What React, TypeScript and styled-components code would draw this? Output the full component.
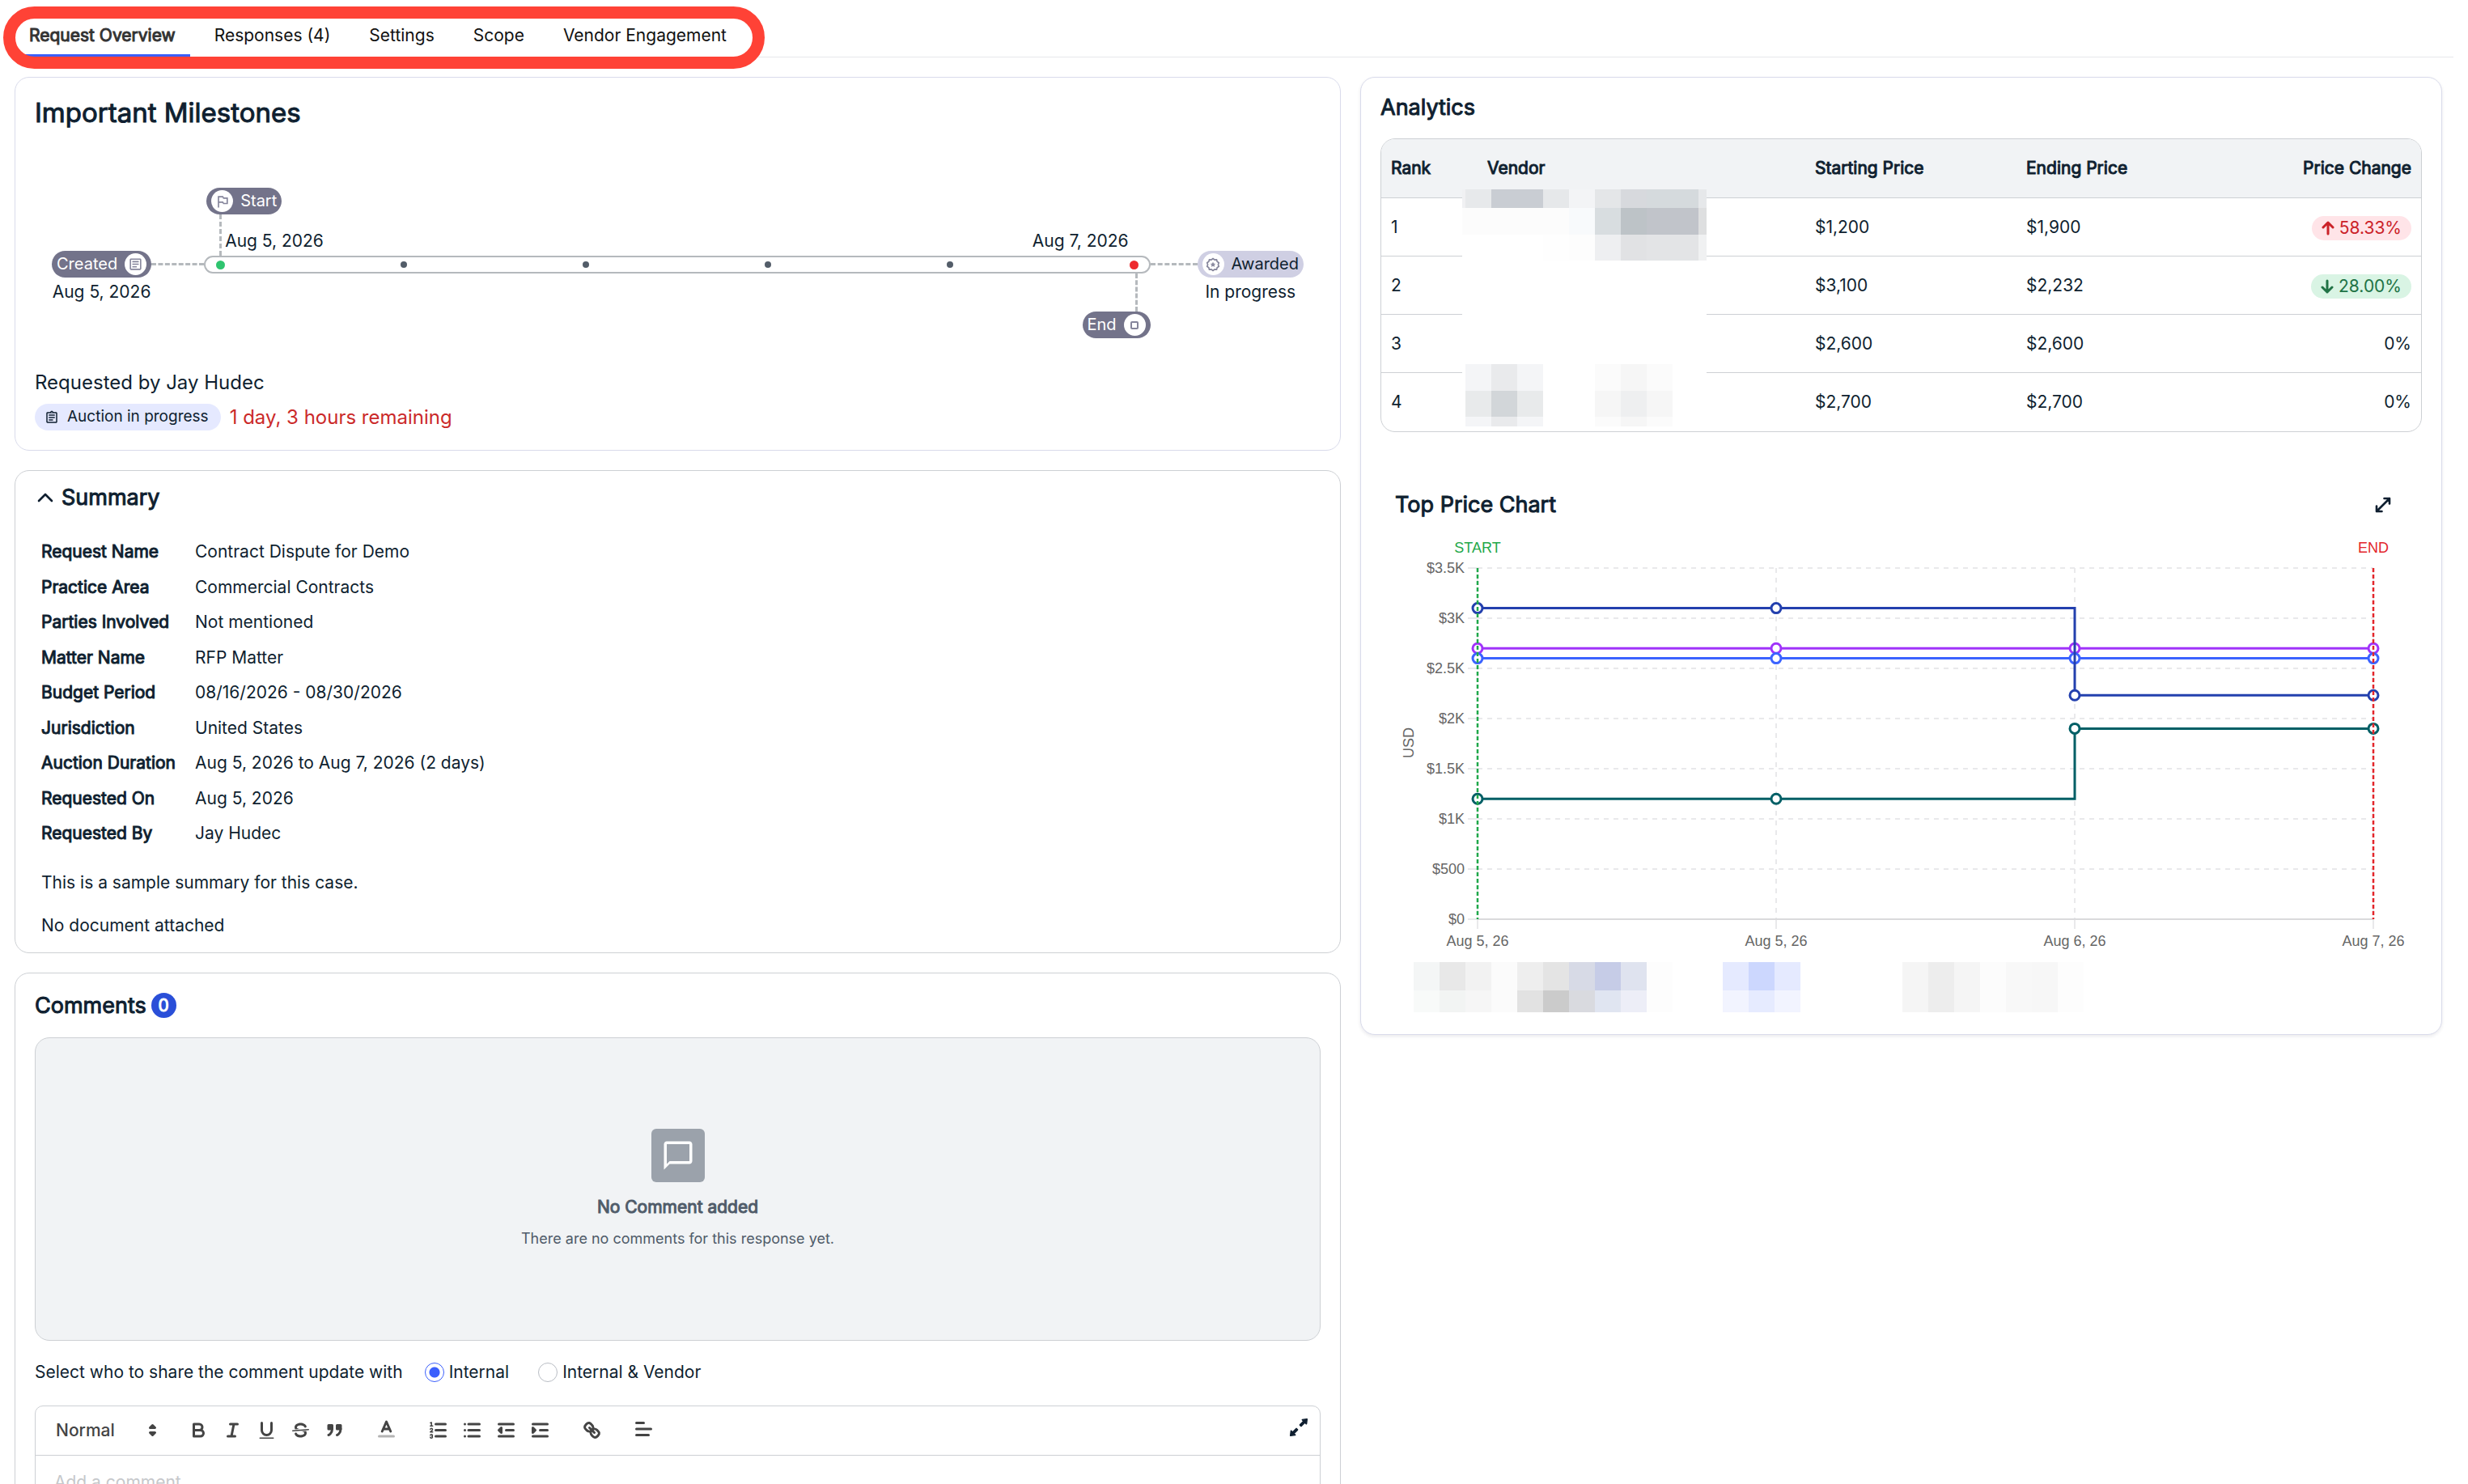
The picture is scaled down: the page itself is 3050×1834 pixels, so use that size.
import React, { useState } from "react";
import styled, { createGlobalStyle, css } from "styled-components";
import {
  MdOutlineArticle,
  MdOutlinedFlag,
  MdOutlineAssignment,
  MdChatBubbleOutline,
} from "react-icons/md";
import { AiOutlineArrowsAlt } from "react-icons/ai";

const color = {
  ink: "#0f1f30",
  line: "#cdd0d4",
  lavender: "#d9dbeb",
  track: "#b5b9bd",
  pill: "#73738a",
  soft: "#f1f3f5",
  blue: "#3b5ffc",
  toolbar: "#444444",
};

const GlobalStyle = createGlobalStyle`
  *, *::before, *::after { box-sizing: border-box; }
  body {
    margin: 0;
    background: #ffffff;
    color: ${color.ink};
    font-family: Inter, "Liberation Sans", sans-serif;
    font-size: 21px;
    line-height: 1.5;
  }
  h1, h2, h3, p, dl, dd, dt { margin: 0; font-weight: 400; }
  button { font: inherit; color: inherit; background: none; border: 0; padding: 0; cursor: pointer; }
  svg { display: block; }
`;

const strong = css`
  -webkit-text-stroke: 1px currentColor;
`;

const Page = styled.div`
  height: 100vh;
  overflow: hidden;
`;

/* ---------- Tabs ---------- */

const TabBar = styled.nav`
  position: relative;
  display: flex;
  gap: 12px;
  height: 71px;
  margin: 0 18px;
  border-bottom: 1px solid #e7e8ec;
`;

const Tab = styled.button<{ $active?: boolean }>`
  padding: 20px 18px 0;
  color: ${(p) => (p.$active ? "#333333" : "#111111")};
  border-bottom: 3px solid ${(p) => (p.$active ? color.blue : "transparent")};
  ${(p) => p.$active && strong}
`;

const Highlight = styled.div`
  position: absolute;
  left: -14px;
  top: 8px;
  width: 941px;
  height: 77px;
  border: 15px solid #ff4236;
  border-radius: 39px;
  pointer-events: none;
`;

/* ---------- Shell ---------- */

const Columns = styled.main`
  display: grid;
  grid-template-columns: minmax(0, 1639fr) minmax(0, 1337fr);
  align-items: start;
  gap: 24px;
  padding: 24px 32px 24px 18px;
`;

const Stack = styled.div`
  display: flex;
  flex-direction: column;
  gap: 24px;
`;

const Card = styled.section<{ $edge?: string; $raised?: boolean }>`
  padding: 24px;
  border: 1px solid ${(p) => p.$edge ?? color.line};
  border-radius: 18px;
  background: #ffffff;
  box-shadow: ${(p) => (p.$raised ? "0 2px 4px rgba(20, 20, 60, 0.09)" : "none")};
`;

const PageHeading = styled.h1`
  font-size: 33px;
  line-height: 38px;
  ${strong}
`;

const Heading = styled.h2`
  font-size: 27px;
  line-height: 38px;
  ${strong}
`;

/* ---------- Milestones ---------- */

const Timeline = styled.div`
  display: flex;
  align-items: flex-start;
  margin: 74px 21px 37px;
`;

const EndPoint = styled.div`
  display: flex;
  flex-direction: column;
  align-items: center;
  gap: 2px;
  padding-top: 78px;
  line-height: 32px;
`;

const Connector = styled.div<{ $length: number }>`
  width: ${(p) => p.$length}px;
  margin-top: 93px;
  border-top: 3px dashed ${color.track};
`;

const Pill = styled.span<{ $light?: boolean; $iconLast?: boolean }>`
  display: inline-flex;
  flex-direction: ${(p) => (p.$iconLast ? "row-reverse" : "row")};
  align-items: center;
  gap: 9px;
  height: 33px;
  padding: 0 6px;
  border-radius: 17px;
  font-size: 20px;
  line-height: 33px;
  color: ${(p) => (p.$light ? color.ink : "#ffffff")};
  background: ${(p) => (p.$light ? "#cfcfe3" : color.pill)};
`;

const PillIcon = styled.span`
  display: grid;
  place-items: center;
  width: 27px;
  height: 27px;
  border-radius: 50%;
  background: #ffffff;
  color: #85859b;
`;

const Track = styled.div`
  flex: 1;
  display: flex;
  flex-direction: column;
`;

const PillRow = styled.div<{ $end?: boolean }>`
  display: flex;
  justify-content: ${(p) => (p.$end ? "flex-end" : "flex-start")};
  padding-left: 3px;
`;

const StemRow = styled.div`
  display: flex;
  justify-content: space-between;
  align-items: flex-end;
  height: 51px;
  padding: 0 27px 0 19px;
`;

const DateGroup = styled.div`
  display: flex;
  align-items: flex-end;
  gap: 4px;
  line-height: 30px;
  padding-bottom: 3px;
`;

const Stem = styled.div<{ $height: number }>`
  height: ${(p) => p.$height}px;
  margin-bottom: -3px;
  border-left: 3px dashed ${color.track};
`;

const Bar = styled.div`
  display: flex;
  justify-content: space-between;
  align-items: center;
  height: 22px;
  padding: 0 13px;
  border: 2px solid ${color.track};
  border-radius: 11px;
`;

const Dot = styled.span<{ $tone?: string }>`
  width: ${(p) => (p.$tone ? 11 : 8)}px;
  height: ${(p) => (p.$tone ? 11 : 8)}px;
  border-radius: 50%;
  background: ${(p) => p.$tone ?? "#535d69"};
`;

const EndStemRow = styled.div`
  display: flex;
  justify-content: flex-end;
  height: 47px;
  padding-right: 16px;
`;

const Requester = styled.p`
  font-size: 24px;
  line-height: 36px;
`;

const StatusRow = styled.div`
  display: flex;
  align-items: center;
  gap: 11px;
  margin-top: 8px;
`;

const StatusChip = styled.span`
  display: inline-flex;
  align-items: center;
  gap: 10px;
  height: 33px;
  padding: 0 15px 0 12px;
  border-radius: 17px;
  font-size: 19px;
  background: #e5e9ff;
`;

const Remaining = styled.span`
  font-size: 24px;
  line-height: 33px;
  color: #cb2a2a;
`;

/* ---------- Summary ---------- */

const SummaryCard = styled(Card)`
  padding: 14px 32px 17px;
`;

const Toggle = styled.button`
  display: flex;
  align-items: center;
  gap: 10px;
  margin-left: -5px;
`;

const Facts = styled.dl`
  display: grid;
  grid-template-columns: max-content 1fr;
  gap: 12px 24px;
  margin-top: 32px;
`;

const Term = styled.dt`
  ${strong}
`;

const Note = styled.p`
  margin-top: 22px;
`;

const LeadNote = styled.p`
  margin-top: 29px;
`;

/* ---------- Comments ---------- */

const CommentsHeading = styled.h2`
  display: flex;
  align-items: center;
  gap: 6px;
  font-size: 27px;
  line-height: 31px;
  ${strong}
`;

const Count = styled.span`
  width: 31px;
  height: 31px;
  border-radius: 50%;
  background: #2a4fd8;
  color: #ffffff;
  font-size: 21px;
  line-height: 31px;
  text-align: center;
`;

const EmptyState = styled.div`
  display: flex;
  flex-direction: column;
  align-items: center;
  justify-content: center;
  height: 375px;
  margin: 24px 0;
  border: 1px solid ${color.line};
  border-radius: 18px;
  background: ${color.soft};
  color: #4f5b69;
`;

const EmptyIcon = styled.span`
  display: grid;
  place-items: center;
  width: 66px;
  height: 66px;
  border-radius: 6px;
  background: #9ba2ab;
  color: #ffffff;
`;

const EmptyTitle = styled.p`
  margin: 15px 0 9px;
  line-height: 32px;
  ${strong}
`;

const EmptyText = styled.p`
  font-size: 18px;
  line-height: 27px;
`;

const Audience = styled.fieldset`
  display: flex;
  align-items: center;
  gap: 36px;
  margin: 0 0 26px;
  padding: 0;
  border: 0;
  line-height: 30px;
`;

const AudienceText = styled.span`
  margin-right: -9px;
`;

const RadioLabel = styled.label`
  display: flex;
  align-items: center;
  gap: 6px;
`;

const Radio = styled.input`
  appearance: none;
  width: 24px;
  height: 24px;
  margin: 0;
  border: 1px solid #b9bdc4;
  border-radius: 50%;
  background: #ffffff;
  &:checked {
    border-color: ${color.blue};
    background: radial-gradient(circle, ${color.blue} 6px, #ffffff 7px);
  }
`;

const Editor = styled.div`
  border: 1px solid ${color.line};
  border-radius: 10px;
`;

const Toolbar = styled.div`
  display: flex;
  align-items: center;
  gap: 22px;
  height: 61px;
  padding: 0 11px;
  border-bottom: 1px solid ${color.line};
  color: ${color.toolbar};
`;

const ToolGroup = styled.div`
  display: flex;
`;

const ToolButton = styled.button`
  display: grid;
  place-items: center;
  width: 42px;
  height: 36px;
`;

const ExpandTool = styled.button`
  margin: 0 0 8px auto;
  color: ${color.ink};
`;

const StylePicker = styled.label`
  display: grid;
  align-items: center;
  width: 147px;
  > * { grid-area: 1 / 1; }
  > svg { justify-self: end; pointer-events: none; }
`;

const StyleSelect = styled.select`
  appearance: none;
  width: 100%;
  height: 36px;
  padding: 0 14px;
  border: 0;
  background: none;
  color: ${color.toolbar};
  font: inherit;
  font-weight: 500;
`;

const CommentBox = styled.textarea`
  display: block;
  width: 100%;
  height: 180px;
  padding: 17px 23px;
  border: 0;
  resize: none;
  background: none;
  font: inherit;
  &::placeholder { color: #c6c8cb; }
`;

/* ---------- Analytics ---------- */

const AnalyticsCard = styled(Card)`
  padding: 18px 24px 27px;
`;

const TableFrame = styled.div`
  position: relative;
  margin-top: 19px;
  border: 1px solid ${color.line};
  border-radius: 18px;
`;

const PriceTable = styled.table`
  width: 100%;
  table-layout: fixed;
  border-collapse: separate;
  border-spacing: 0;
  th, td { height: 72px; padding: 0 12px; text-align: left; }
  th { height: 73px; font-weight: 400; background: ${color.soft}; ${strong} }
  th:first-child { border-top-left-radius: 17px; }
  th:last-child { border-top-right-radius: 17px; }
  th:last-child, td:last-child { text-align: right; }
  th, tr:not(:last-child) td { border-bottom: 1px solid ${color.line}; }
`;

const Col = styled.col<{ $width?: number }>`
  width: ${(p) => (p.$width ? `${p.$width}px` : "auto")};
`;

const Change = styled.span<{ $up?: boolean }>`
  display: inline-flex;
  align-items: center;
  gap: 6px;
  height: 30px;
  padding: 0 12px;
  border-radius: 15px;
  line-height: 30px;
  vertical-align: middle;
  color: ${(p) => (p.$up ? "#cb2229" : "#217346")};
  background: ${(p) => (p.$up ? "#ffe4e8" : "#d9f4e4")};
`;

const Mask = styled.div`
  position: absolute;
  left: 100px;
  top: 62px;
  display: grid;
  grid-template-columns: 4px repeat(9, 32px) 10px;
  grid-template-rows: 23px 33px 32px 128px 33px 32px 12px;
`;

const Tile = styled.span<{ $tone: string }>`
  background: ${(p) => p.$tone};
`;

const ChartHead = styled.div`
  display: flex;
  align-items: center;
  justify-content: space-between;
  margin: 71px 38px 13px 18px;
`;

const ChartSvg = styled.svg`
  width: 100%;
  height: auto;
  font-family: "Liberation Sans", Arial, sans-serif;
  font-size: 18px;
`;

const Legend = styled.div`
  display: flex;
  padding-left: 41px;
`;

const LegendSwatch = styled.div<{ $columns: number; $after: number }>`
  display: grid;
  grid-template-columns: repeat(${(p) => p.$columns}, 32px);
  grid-template-rows: 35px 27px;
  margin-right: ${(p) => p.$after}px;
`;

/* ---------- Data ---------- */

const tabs = ["Request Overview", "Responses (4)", "Settings", "Scope", "Vendor Engagement"];

const facts = [
  ["Request Name", "Contract Dispute for Demo"],
  ["Practice Area", "Commercial Contracts"],
  ["Parties Involved", "Not mentioned"],
  ["Matter Name", "RFP Matter"],
  ["Budget Period", "08/16/2026 - 08/30/2026"],
  ["Jurisdiction", "United States"],
  ["Auction Duration", "Aug 5, 2026 to Aug 7, 2026 (2 days)"],
  ["Requested On", "Aug 5, 2026"],
  ["Requested By", "Jay Hudec"],
];

const vendors = [
  { rank: 1, start: "$1,200", end: "$1,900", change: "58.33%", direction: "up" },
  { rank: 2, start: "$3,100", end: "$2,232", change: "28.00%", direction: "down" },
  { rank: 3, start: "$2,600", end: "$2,600", change: "0%" },
  { rank: 4, start: "$2,700", end: "$2,700", change: "0%" },
];

const w = "#ffffff";
const maskTiles = [
  ["#f0f1f3", "#e7e9eb", "#c9cdd3", "#c9cdd3", "#e6e8ea", "#f3f4f6", "#e4e6e8", "#d7d9dd", "#d5dadd", "#d5dadd", "#e6e8ea"],
  ["#fcfcfc", "#fcfcfc", "#fcfcfc", "#fcfcfc", "#fcfcfc", "#f8fafc", "#d8dde0", "#bdc3c7", "#c1c4ca", "#c1c4ca", "#dedfe0"],
  [w, w, w, w, "#fefefe", "#fdfdfd", "#eeeff1", "#e1e2e4", "#e3e4e6", "#e3e4e6", "#f0f1f2"],
  [w, w, w, w, w, w, w, w, w, w, w],
  [w, "#f4f5f7", "#e9eaec", "#f4f5f7", w, w, "#fbfbfb", "#f6f6f6", "#fbfbfb", w, w],
  [w, "#e8eaeb", "#d2d6d9", "#e8eaeb", w, w, "#f6f6f6", "#eeeff0", "#f6f6f6", w, w],
  [w, "#f4f5f7", "#e9eaec", "#f4f5f7", w, w, "#fbfbfb", "#f6f6f6", "#fbfbfb", w, w],
];

const legendGroups = [
  {
    columns: 10,
    after: 62,
    tiles: [
      "#f4f6f6", "#e8e8e8", "#f2f2f2", "#fbfbfb", "#eeeeee", "#e4e4e4", "#d7dae6", "#c6cce7", "#dfe3ef", "#fdfdfd",
      "#f8faf9", "#f2f4f3", "#f6f6f6", "#fbfbfb", "#e2e2e2", "#cbcbcb", "#d9dadf", "#e0e5f1", "#edeef7", "#fdfdfd",
    ],
  },
  {
    columns: 3,
    after: 126,
    tiles: ["#e5eaff", "#ccd7fe", "#e5eaff", "#f2f4ff", "#e6ebff", "#f2f4ff"],
  },
  {
    columns: 7,
    after: 0,
    tiles: [
      "#f5f5f5", "#ededed", "#f5f5f5", "#fcfcfc", "#f8f8f8", "#f7f7f7", "#fdfdfd",
      "#f5f5f5", "#ededed", "#f5f5f5", "#fcfcfc", "#f8f8f8", "#f7f7f7", "#fdfdfd",
    ],
  },
];

/* ---------- Icons ---------- */

const Arrow = ({ up }: { up?: boolean }) => (
  <svg width="16" height="18" viewBox="0 0 16 18" fill="none" stroke="currentColor" strokeWidth="3" strokeLinecap="round" strokeLinejoin="round">
    {up ? <path d="M8 16V2M2 8l6-6 6 6" /> : <path d="M8 2v14M2 10l6 6 6-6" />}
  </svg>
);

const Chevron = () => (
  <svg width="20" height="14" viewBox="0 0 20 14" fill="none" stroke="currentColor" strokeWidth="2.6" strokeLinecap="round" strokeLinejoin="round">
    <path d="M2 11l8-8 8 8" />
  </svg>
);

const SquareIcon = () => (
  <svg width="14" height="14" viewBox="0 0 14 14" fill="none" stroke="currentColor" strokeWidth="2">
    <rect x="3" y="3" width="8" height="8" rx="1" />
  </svg>
);

const AwardIcon = () => (
  <svg width="20" height="20" viewBox="0 0 24 24" fill="none" stroke="currentColor" strokeWidth="2" strokeLinejoin="round">
    <path d="M12 3l2.4 2 3-.4.8 3 2.6 1.6L19.7 12l1.1 2.8-2.6 1.6-.8 3-3-.4L12 21l-2.4-2-3 .4-.8-3-2.6-1.6L4.3 12 3.2 9.2l2.6-1.6.8-3 3 .4z" />
    <path d="M12 9l.9 2 2.1.2-1.6 1.4.5 2.1-1.9-1.1-1.9 1.1.5-2.1L9 11.2l2.1-.2z" fill="currentColor" strokeWidth="1" />
  </svg>
);

const ExpandIcon = () => (
  <svg width="20" height="20" viewBox="0 0 20 20" fill="none" stroke="currentColor" strokeWidth="2.6" strokeLinejoin="round" strokeLinecap="round">
    <path d="M2 18L18 2M11.5 2H18v6.5M8.5 18H2v-6.5" />
  </svg>
);

const QuillIcon = ({ children }: { children: React.ReactNode }) => (
  <svg width="27" height="27" viewBox="0 0 18 18" fill="none" stroke="currentColor" strokeWidth="2" strokeLinecap="round" strokeLinejoin="round">
    {children}
  </svg>
);

const toolGroups: { label: string; icon: React.ReactNode }[][] = [
  [
    {
      label: "Bold",
      icon: <path d="M5,4H9.5A2.5,2.5,0,0,1,9.5,9H5ZM5,9h5.5A2.5,2.5,0,0,1,10.5,14H5Z" />,
    },
    { label: "Italic", icon: <path d="M7,4H13M5,14H11M8,14L10,4" /> },
    {
      label: "Underline",
      icon: (
        <>
          <path d="M5,3V9a4,4,0,0,0,8,0V3" />
          <rect x="3" y="15" width="12" height="1" rx="0.5" fill="currentColor" stroke="none" />
        </>
      ),
    },
    {
      label: "Strike",
      icon: (
        <>
          <path strokeWidth="1" d="M15.5,8.5L2.5,9.5" />
          <g fill="currentColor" stroke="none">
            <path d="M9.007,8C6.542,7.791,6,7.519,6,6.5,6,5.792,7.283,5,9,5c1.571,0,2.765.679,2.969,1.309a1,1,0,0,0,1.9-.617C13.356,4.106,11.354,3,9,3,6.2,3,4,4.538,4,6.5a3.2,3.2,0,0,0,.5,1.843Z" />
            <path d="M8.984,10C11.457,10.208,12,10.479,12,11.5c0,.708-1.283,1.5-3,1.5-1.571,0-2.765-.679-2.969-1.309a1,1,0,1,0-1.9.617C4.644,13.894,6.646,15,9,15c2.8,0,5-1.538,5-3.5a3.2,3.2,0,0,0-.5-1.843Z" />
          </g>
        </>
      ),
    },
    {
      label: "Blockquote",
      icon: (
        <g fill="currentColor">
          <rect x="4" y="5" width="3" height="3" />
          <rect x="11" y="5" width="3" height="3" />
          <path d="M7,8c0,4.031-3,5-3,5M14,8c0,4.031-3,5-3,5" />
        </g>
      ),
    },
  ],
  [
    {
      label: "Text colour",
      icon: (
        <>
          <path opacity="0.4" d="M3,14H15" />
          <path d="M5.5,10L9,2L12.5,10M11.63,8H6.38" />
        </>
      ),
    },
  ],
  [
    {
      label: "Ordered list",
      icon: (
        <>
          <path d="M7,4H15M7,9H15M7,14H15" />
          <g strokeWidth="1">
            <path d="M2.5,5.5H4.5M3.5,5.5V2.6L2.6,3" />
            <path d="M4.5,10.5h-2c0-.234,1.85-1.076,1.85-2.234A.959,.959,0,0,0,2.5,8.156" />
            <path d="M2.5,14.846a.959,.959,0,0,0,1.85-.109A.7,.7,0,0,0,3.75,14a.688,.688,0,0,0,.6-.736,.959,.959,0,0,0-1.85-.109" />
          </g>
        </>
      ),
    },
    { label: "Bulleted list", icon: <path d="M6,4H15M6,9H15M6,14H15M3,4H3M3,9H3M3,14H3" /> },
    {
      label: "Decrease indent",
      icon: (
        <>
          <path d="M3,14H15M3,4H15M9,9H15" />
          <path fill="currentColor" d="M5,7V11L3,9Z" />
        </>
      ),
    },
    {
      label: "Increase indent",
      icon: (
        <>
          <path d="M3,14H15M3,4H15M9,9H15" />
          <path fill="currentColor" d="M3,7V11L5,9Z" />
        </>
      ),
    },
  ],
  [
    {
      label: "Link",
      icon: (
        <>
          <path d="M7,7L11,11" />
          <path d="M8.9,4.577a3.476,3.476,0,0,1,.36,4.679A3.476,3.476,0,0,1,4.577,8.9C3.185,7.5,2.035,6.4,4.217,4.217S7.5,3.185,8.9,4.577Z" />
          <path d="M13.423,9.1a3.476,3.476,0,0,0-4.679-.36,3.476,3.476,0,0,0,.36,4.679c1.392,1.392,2.5,2.542,4.679.36S14.815,10.5,13.423,9.1Z" />
        </>
      ),
    },
  ],
  [{ label: "Align", icon: <path d="M3,8H15M3,13H13M3,3H9" /> }],
];

/* ---------- Chart ---------- */

const plot = { left: 120, right: 1227, top: 46, bottom: 480 };
const columnsX = [0, 1, 2, 3].map((i) => plot.left + i * 369);
const valueY = (v: number) => plot.bottom - (v / 3500) * (plot.bottom - plot.top);
const yTicks: [number, string][] = [
  [3500, "$3.5K"], [3000, "$3K"], [2500, "$2.5K"], [2000, "$2K"],
  [1500, "$1.5K"], [1000, "$1K"], [500, "$500"], [0, "$0"],
];
const xTicks = ["Aug 5, 26", "Aug 5, 26", "Aug 6, 26", "Aug 7, 26"];
const series = [
  { tone: "#a033fa", values: [2700, 2700, 2700, 2700] },
  { tone: "#3b63ff", values: [2600, 2600, 2600, 2600] },
  { tone: "#2340ae", values: [3100, 3100, 2232, 2232] },
  { tone: "#005f66", values: [1200, 1200, 1900, 1900] },
];

const stepPath = (values: number[]) =>
  values
    .map((v, i) => (i === 0 ? `M${columnsX[0]} ${valueY(v)}` : `H${columnsX[i]}V${valueY(v)}`))
    .join("");

const PriceChart = () => (
  <ChartSvg viewBox="0 0 1287 533" role="img" aria-label="Top price chart in USD">
    <g stroke="#e9e9eb" strokeWidth="2">
      {yTicks.map(([v]) => (
        <React.Fragment key={v}>
          <path d={`M${plot.left - 12} ${valueY(v)}H${plot.left}`} />
          <path strokeDasharray="6 6" d={`M${plot.left} ${valueY(v)}H${plot.right}`} />
        </React.Fragment>
      ))}
      {columnsX.map((x) => (
        <React.Fragment key={x}>
          <path d={`M${x} ${plot.bottom}v12`} />
          <path strokeDasharray="6 6" d={`M${x} ${plot.top}V${plot.bottom}`} />
        </React.Fragment>
      ))}
      <path stroke="#dadadc" d={`M${plot.left} ${plot.bottom}H${plot.right}`} />
    </g>
    <g fill="#666666">
      {yTicks.map(([v, label]) => (
        <text key={v} x={plot.left - 16} y={valueY(v) + 6} textAnchor="end">{label}</text>
      ))}
      {xTicks.map((label, i) => (
        <text key={i} x={columnsX[i]} y={plot.bottom + 33} textAnchor="middle">{label}</text>
      ))}
      <text x="41" y="262" textAnchor="middle" transform="rotate(-90 41 262)">USD</text>
    </g>
    {series.map((s) => (
      <g key={s.tone} fill="none" stroke={s.tone} strokeWidth="3">
        <path d={stepPath(s.values)} />
        {s.values.map((v, i) => (
          <circle key={i} cx={columnsX[i]} cy={valueY(v)} r="6" fill="#ffffff" />
        ))}
      </g>
    ))}
    <g strokeWidth="2.5" strokeDasharray="5 3">
      <path stroke="#1fa84a" d={`M${plot.left} ${plot.top}V${plot.bottom}`} />
      <path stroke="#e3262b" d={`M${plot.right} ${plot.top}V${plot.bottom}`} />
    </g>
    <text x={plot.left} y={plot.top - 19} textAnchor="middle" fill="#1fa84a">START</text>
    <text x={plot.right} y={plot.top - 19} textAnchor="middle" fill="#e3262b">END</text>
  </ChartSvg>
);

/* ---------- Sections ---------- */

const Milestones = () => (
  <Card $edge={color.lavender}>
    <PageHeading>Important Milestones</PageHeading>
    <Timeline>
      <EndPoint>
        <Pill $iconLast>
          <PillIcon><MdOutlineArticle size={19} /></PillIcon>
          Created
        </Pill>
        Aug 5, 2026
      </EndPoint>
      <Connector $length={65} />
      <Track>
        <PillRow>
          <Pill>
            <PillIcon><MdOutlinedFlag size={20} /></PillIcon>
            Start
          </Pill>
        </PillRow>
        <StemRow>
          <DateGroup>
            <Stem $height={51} />
            Aug 5, 2026
          </DateGroup>
          <DateGroup>Aug 7, 2026</DateGroup>
        </StemRow>
        <Bar>
          <Dot $tone="#2fc46f" />
          <Dot />
          <Dot />
          <Dot />
          <Dot />
          <Dot $tone="#ee2a2e" />
        </Bar>
        <EndStemRow><Stem $height={47} /></EndStemRow>
        <PillRow $end>
          <Pill $iconLast>
            <PillIcon><SquareIcon /></PillIcon>
            End
          </Pill>
        </PillRow>
      </Track>
      <Connector $length={58} />
      <EndPoint>
        <Pill $light>
          <PillIcon><AwardIcon /></PillIcon>
          Awarded
        </Pill>
        In progress
      </EndPoint>
    </Timeline>
    <Requester>Requested by Jay Hudec</Requester>
    <StatusRow>
      <StatusChip><MdOutlineAssignment size={18} />Auction in progress</StatusChip>
      <Remaining>1 day, 3 hours remaining</Remaining>
    </StatusRow>
  </Card>
);

const Summary = () => {
  const [open, setOpen] = useState(true);
  return (
    <SummaryCard>
      <Toggle aria-expanded={open} onClick={() => setOpen(!open)}>
        <Chevron />
        <Heading as="span">Summary</Heading>
      </Toggle>
      {open && (
        <>
          <Facts>
            {facts.map(([term, value]) => (
              <React.Fragment key={term}>
                <Term>{term}</Term>
                <dd>{value}</dd>
              </React.Fragment>
            ))}
          </Facts>
          <LeadNote>This is a sample summary for this case.</LeadNote>
          <Note>No document attached</Note>
        </>
      )}
    </SummaryCard>
  );
};

const Comments = () => (
  <Card>
    <CommentsHeading>Comments <Count>0</Count></CommentsHeading>
    <EmptyState>
      <EmptyIcon><MdChatBubbleOutline size={42} /></EmptyIcon>
      <EmptyTitle>No Comment added</EmptyTitle>
      <EmptyText>There are no comments for this response yet.</EmptyText>
    </EmptyState>
    <Audience>
      <AudienceText>Select who to share the comment update with</AudienceText>
      <RadioLabel><Radio type="radio" name="audience" defaultChecked />Internal</RadioLabel>
      <RadioLabel><Radio type="radio" name="audience" />Internal &amp; Vendor</RadioLabel>
    </Audience>
    <Editor>
      <Toolbar>
        <StylePicker>
          <StyleSelect aria-label="Text style"><option>Normal</option></StyleSelect>
          <svg width="27" height="27" viewBox="0 0 18 18" fill="currentColor" stroke="currentColor" strokeWidth="2" strokeLinejoin="round">
            <path d="M7,11L9,13L11,11ZM7,7L9,5L11,7Z" />
          </svg>
        </StylePicker>
        {toolGroups.map((group, i) => (
          <ToolGroup key={i}>
            {group.map((tool) => (
              <ToolButton key={tool.label} aria-label={tool.label}>
                <QuillIcon>{tool.icon}</QuillIcon>
              </ToolButton>
            ))}
          </ToolGroup>
        ))}
        <ExpandTool aria-label="Expand editor">
          <AiOutlineArrowsAlt size={30} stroke="currentColor" strokeWidth={50} />
        </ExpandTool>
      </Toolbar>
      <CommentBox aria-label="Comment" placeholder="Add a comment" />
    </Editor>
  </Card>
);

const Analytics = () => (
  <AnalyticsCard $edge={color.lavender} $raised>
    <Heading>Analytics</Heading>
    <TableFrame>
      <PriceTable>
        <colgroup>
          <Col $width={119} />
          <Col $width={405} />
          <Col $width={261} />
          <Col $width={261} />
          <Col />
        </colgroup>
        <thead>
          <tr>
            <th>Rank</th>
            <th>Vendor</th>
            <th>Starting Price</th>
            <th>Ending Price</th>
            <th>Price Change</th>
          </tr>
        </thead>
        <tbody>
          {vendors.map((v) => (
            <tr key={v.rank}>
              <td>{v.rank}</td>
              <td />
              <td>{v.start}</td>
              <td>{v.end}</td>
              <td>
                {v.direction ? (
                  <Change $up={v.direction === "up"}>
                    <Arrow up={v.direction === "up"} />
                    {v.change}
                  </Change>
                ) : (
                  v.change
                )}
              </td>
            </tr>
          ))}
        </tbody>
      </PriceTable>
      <Mask aria-hidden>
        {maskTiles.flatMap((row, y) => row.map((tone, x) => <Tile key={`${y}-${x}`} $tone={tone} />))}
      </Mask>
    </TableFrame>
    <ChartHead>
      <Heading>Top Price Chart</Heading>
      <button aria-label="Expand chart"><ExpandIcon /></button>
    </ChartHead>
    <PriceChart />
    <Legend aria-hidden>
      {legendGroups.map((group, i) => (
        <LegendSwatch key={i} $columns={group.columns} $after={group.after}>
          {group.tiles.map((tone, j) => <Tile key={j} $tone={tone} />)}
        </LegendSwatch>
      ))}
    </Legend>
  </AnalyticsCard>
);

export default function App() {
  return (
    <Page>
      <GlobalStyle />
      <TabBar>
        {tabs.map((tab, i) => (
          <Tab key={tab} $active={i === 0}>{tab}</Tab>
        ))}
        <Highlight />
      </TabBar>
      <Columns>
        <Stack>
          <Milestones />
          <Summary />
          <Comments />
        </Stack>
        <Analytics />
      </Columns>
    </Page>
  );
}
